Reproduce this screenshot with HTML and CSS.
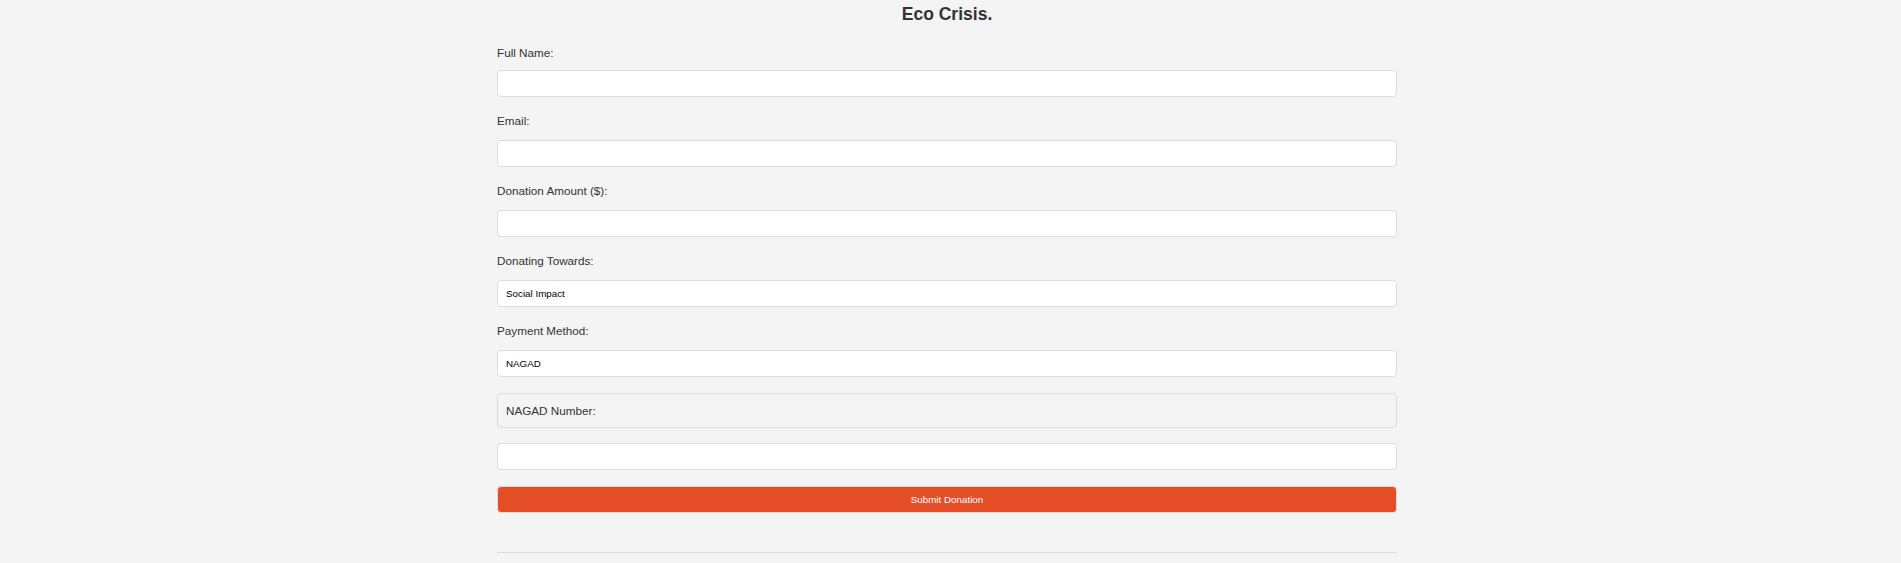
FILE: index.html
```html
<!DOCTYPE html>
<html lang="en">
<head>
<meta charset="utf-8">
<title>Eco Crisis. Donate</title>
<link rel="stylesheet" href="styles.css">
</head>
<body>
<main class="page">
  <h1 class="title">Eco Crisis.</h1>
  <form class="donate-form">
    <div class="field field-first">
      <label class="field-label" for="name">Full Name:</label>
      <input class="field-input" id="name" type="text">
    </div>
    <div class="field">
      <label class="field-label" for="email">Email:</label>
      <input class="field-input" id="email" type="email">
    </div>
    <div class="field">
      <label class="field-label" for="amount">Donation Amount ($):</label>
      <input class="field-input" id="amount" type="number">
    </div>
    <div class="field">
      <label class="field-label" for="cause">Donating Towards:</label>
      <select class="field-input field-select" id="cause"><option>Social Impact</option></select>
    </div>
    <div class="field field-last">
      <label class="field-label" for="method">Payment Method:</label>
      <select class="field-input field-select" id="method"><option>NAGAD</option></select>
    </div>
    <div class="number-box">NAGAD Number:</div>
    <input class="field-input number-input" type="text">
    <button class="submit-btn" type="button">Submit Donation</button>
  </form>
  <hr class="divider">
</main>
</body>
</html>
```
FILE: styles.css
```css
html, body {
  margin: 0;
  background: #f4f4f4;
  overflow: hidden;
}
body {
  font-family: "Liberation Sans", Arial, sans-serif;
  color: #333;
  padding-right: 7px;
}
.page {
  width: 900px;
  margin: 0 auto;
  padding-top: 4px;
}
.title {
  margin: 0 0 22px;
  font-size: 17.55px;
  line-height: 20px;
  font-weight: bold;
  text-align: center;
  color: #333;
}
.donate-form {
  display: flex;
  flex-direction: column;
}
.field {
  display: flex;
  flex-direction: column;
  gap: 12px;
  margin-bottom: 17px;
}
.field-first {
  gap: 10px;
}
.field-last {
  margin-bottom: 16px;
}
.field-label {
  font-size: 11.7px;
  line-height: 14px;
}
.field-input {
  box-sizing: border-box;
  width: 100%;
  height: 27px;
  margin: 0;
  padding: 0 8px;
  border: 1px solid #dcdcdc;
  border-radius: 4px;
  background: #fff;
  font-family: "Liberation Sans", Arial, sans-serif;
  font-size: 9.8px;
  color: #000;
  outline: none;
}
.field-select {
  appearance: none;
  -webkit-appearance: none;
}
.number-box {
  box-sizing: border-box;
  height: 35px;
  padding: 10px 8px;
  border: 1px solid #dcdcdc;
  border-radius: 4px;
  background: #f4f4f4;
  font-size: 11.7px;
  line-height: 13px;
  margin-bottom: 15px;
}
.number-input {
  margin-bottom: 16px;
}
.submit-btn {
  box-sizing: border-box;
  width: 100%;
  height: 27px;
  margin: 0;
  border: 1px solid #dcdcdc;
  border-radius: 4px;
  background: #e44d26;
  color: #fff;
  font-family: "Liberation Sans", Arial, sans-serif;
  font-size: 9.8px;
  cursor: pointer;
}
.divider {
  margin: 39px 0 0;
  border: 0;
  border-top: 1px solid #dcdcdc;
  height: 0;
}
```
